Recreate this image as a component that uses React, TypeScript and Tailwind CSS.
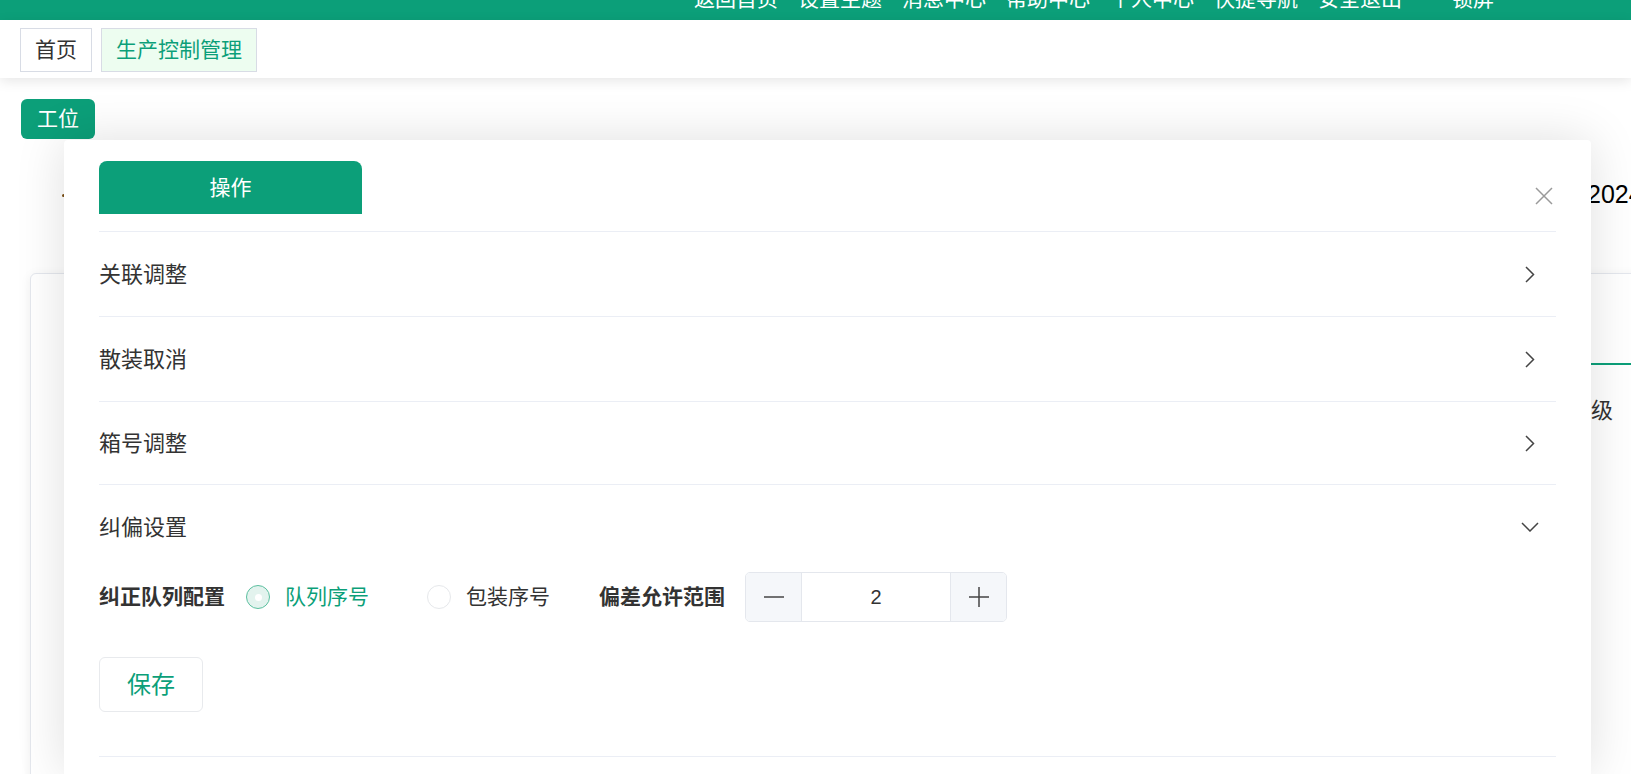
import { useState } from 'react';

const navItems = ['返回首页', '设置主题', '消息中心', '帮助中心', '个人中心', '快捷导航', '安全退出'];

const rows = [
	{ title: '关联调整', height: 'h-[85px]' },
	{ title: '散装取消', height: 'h-[85px]' },
	{ title: '箱号调整', height: 'h-[83px]' },
];

function ChevronRight() {
	return (
		<svg width="10" height="17" viewBox="0 0 10 17" fill="none">
			<polyline points="1,1 8.5,8.5 1,16" stroke="#444" strokeWidth="1.5" />
		</svg>
	);
}

function ChevronDown() {
	return (
		<svg width="18" height="10" viewBox="0 0 18 10" fill="none">
			<polyline points="1,1 9,9 17,1" stroke="#444" strokeWidth="1.5" />
		</svg>
	);
}

function CloseIcon() {
	return (
		<svg width="18" height="18" viewBox="0 0 18 18" fill="none">
			<path d="M1 1L17 17M17 1L1 17" stroke="#9a9a9a" strokeWidth="1.5" />
		</svg>
	);
}

function Radio({ checked, label, onClick }: { checked: boolean; label: string; onClick: () => void }) {
	return (
		<button type="button" onClick={onClick} className="flex items-center">
			<span
				className={
					checked
						? 'flex size-[24px] items-center justify-center rounded-full border border-[#5bbf9f] bg-[#e3f3ee]'
						: 'flex size-[24px] items-center justify-center rounded-full border border-[#e6e8eb] bg-white'
				}
			>
				{checked && <span className="size-[7px] rounded-full bg-white" />}
			</span>
			<span className={checked ? 'ml-[15px] text-[21px] text-[#0c9f79]' : 'ml-[15px] text-[21px] text-[#333]'}>
				{label}
			</span>
		</button>
	);
}

export default function App() {
	const [mode, setMode] = useState('queue');
	const [range, setRange] = useState(2);

	return (
		<div className="relative h-screen overflow-hidden bg-white font-['Liberation_Sans','Noto_Sans_CJK_SC',sans-serif]">
			{/* Top bar */}
			<header className="flex h-[20px] justify-end overflow-hidden bg-[#0c9f79] pr-[137px]">
				<nav className="-mt-[12px] flex gap-[20px] text-[21px] leading-[21px] text-white">
					{navItems.map((item) => (
						<span key={item}>{item}</span>
					))}
					<span className="ml-[30px]">锁屏</span>
				</nav>
			</header>

			{/* Tag views */}
			<div className="relative z-10 flex h-[58px] items-start gap-[9px] bg-white px-[20px] pt-[8px] shadow-[0_3px_12px_rgba(0,0,0,0.10)]">
				<span className="flex h-[44px] w-[72px] items-center justify-center border border-[#d8dce5] text-[21px] text-[#333]">
					首页
				</span>
				<span className="flex h-[44px] w-[156px] items-center justify-center border border-[#d8dce5] bg-[#edfdf0] text-[21px] text-[#0c9f79]">
					生产控制管理
				</span>
			</div>

			{/* Page content behind the drawer */}
			<main>
				<button
					type="button"
					className="ml-[21px] mt-[21px] flex h-[40px] w-[74px] items-center justify-center rounded-[6px] bg-[#0c9f79] text-[21px] text-white"
				>
					工位
				</button>
				<div className="mt-[36px] grid h-[40px] grid-cols-[1587px_max-content] items-center">
					<span className="ml-[62px] size-[3px] rounded-full bg-[#7a4e12]" />
					<span className="whitespace-nowrap text-[25px] text-black">2024-05-20 10:30:00</span>
				</div>
				<div className="ml-[30px] mt-[58px] h-[560px] w-[1700px] rounded-[6px] border border-[#e4e7ed] bg-white shadow-[0_2px_12px_rgba(0,0,0,0.06)]">
					<div className="grid h-[91px] grid-cols-[200px_1fr]">
						<div />
						<div className="border-b-2 border-[#0c9f79]" />
					</div>
					<div className="grid h-[90px] grid-cols-[1516px_max-content] items-center text-[22px] text-[#333]">
						<span />
						<span>优先级</span>
					</div>
				</div>
			</main>

			{/* Drawer panel */}
			<section className="absolute bottom-0 left-[64px] top-[140px] z-20 w-[1527px] rounded-t-[4px] bg-white px-[35px] pt-[21px] shadow-[0_0_50px_rgba(0,0,0,0.13)]">
				<div className="flex h-[71px] items-start justify-between border-b border-[#ebeef5]">
					<div className="flex h-[53px] w-[263px] items-center justify-center rounded-t-[8px] bg-[#0c9f79] text-[21px] text-white">
						操作
					</div>
					<button type="button" className="mr-[3px] mt-[26px]">
						<CloseIcon />
					</button>
				</div>

				{rows.map((row) => (
					<div
						key={row.title}
						className={`flex ${row.height} items-center justify-between border-b border-[#ebeef5] pr-[21px]`}
					>
						<span className="text-[22px] text-[#333]">{row.title}</span>
						<ChevronRight />
					</div>
				))}

				<div className="border-b border-[#ebeef5] pb-[44px]">
					<div className="flex h-[84px] items-center justify-between pr-[17px]">
						<span className="text-[22px] text-[#333]">纠偏设置</span>
						<ChevronDown />
					</div>
					<div className="mt-[3px] flex h-[50px] items-center">
						<span className="text-[21px] font-bold text-[#333]">纠正队列配置</span>
						<div className="ml-[21px] flex items-center gap-[58px]">
							<Radio checked={mode === 'queue'} label="队列序号" onClick={() => setMode('queue')} />
							<Radio checked={mode === 'pack'} label="包装序号" onClick={() => setMode('pack')} />
						</div>
						<span className="ml-[49px] text-[21px] font-bold text-[#333]">偏差允许范围</span>
						<div className="ml-[20px] flex h-[50px] w-[262px] overflow-hidden rounded-[5px] border border-[#e4e7ed]">
							<button
								type="button"
								onClick={() => setRange(range - 1)}
								className="flex w-[56px] items-center justify-center border-r border-[#e4e7ed] bg-[#f5f7fa]"
							>
								<svg width="20" height="2" viewBox="0 0 20 2">
									<path d="M0 1H20" stroke="#444" strokeWidth="1.5" />
								</svg>
							</button>
							<div className="flex flex-1 items-center justify-center text-[20px] text-[#333]">{range}</div>
							<button
								type="button"
								onClick={() => setRange(range + 1)}
								className="flex w-[56px] items-center justify-center border-l border-[#e4e7ed] bg-[#f5f7fa]"
							>
								<svg width="20" height="20" viewBox="0 0 20 20">
									<path d="M0 10H20M10 0V20" stroke="#444" strokeWidth="1.5" />
								</svg>
							</button>
						</div>
					</div>
					<button
						type="button"
						className="mt-[35px] flex h-[55px] w-[104px] items-center justify-center rounded-[6px] border border-[#e8eaed] text-[24px] text-[#0c9f79]"
					>
						保存
					</button>
				</div>
			</section>
		</div>
	);
}
